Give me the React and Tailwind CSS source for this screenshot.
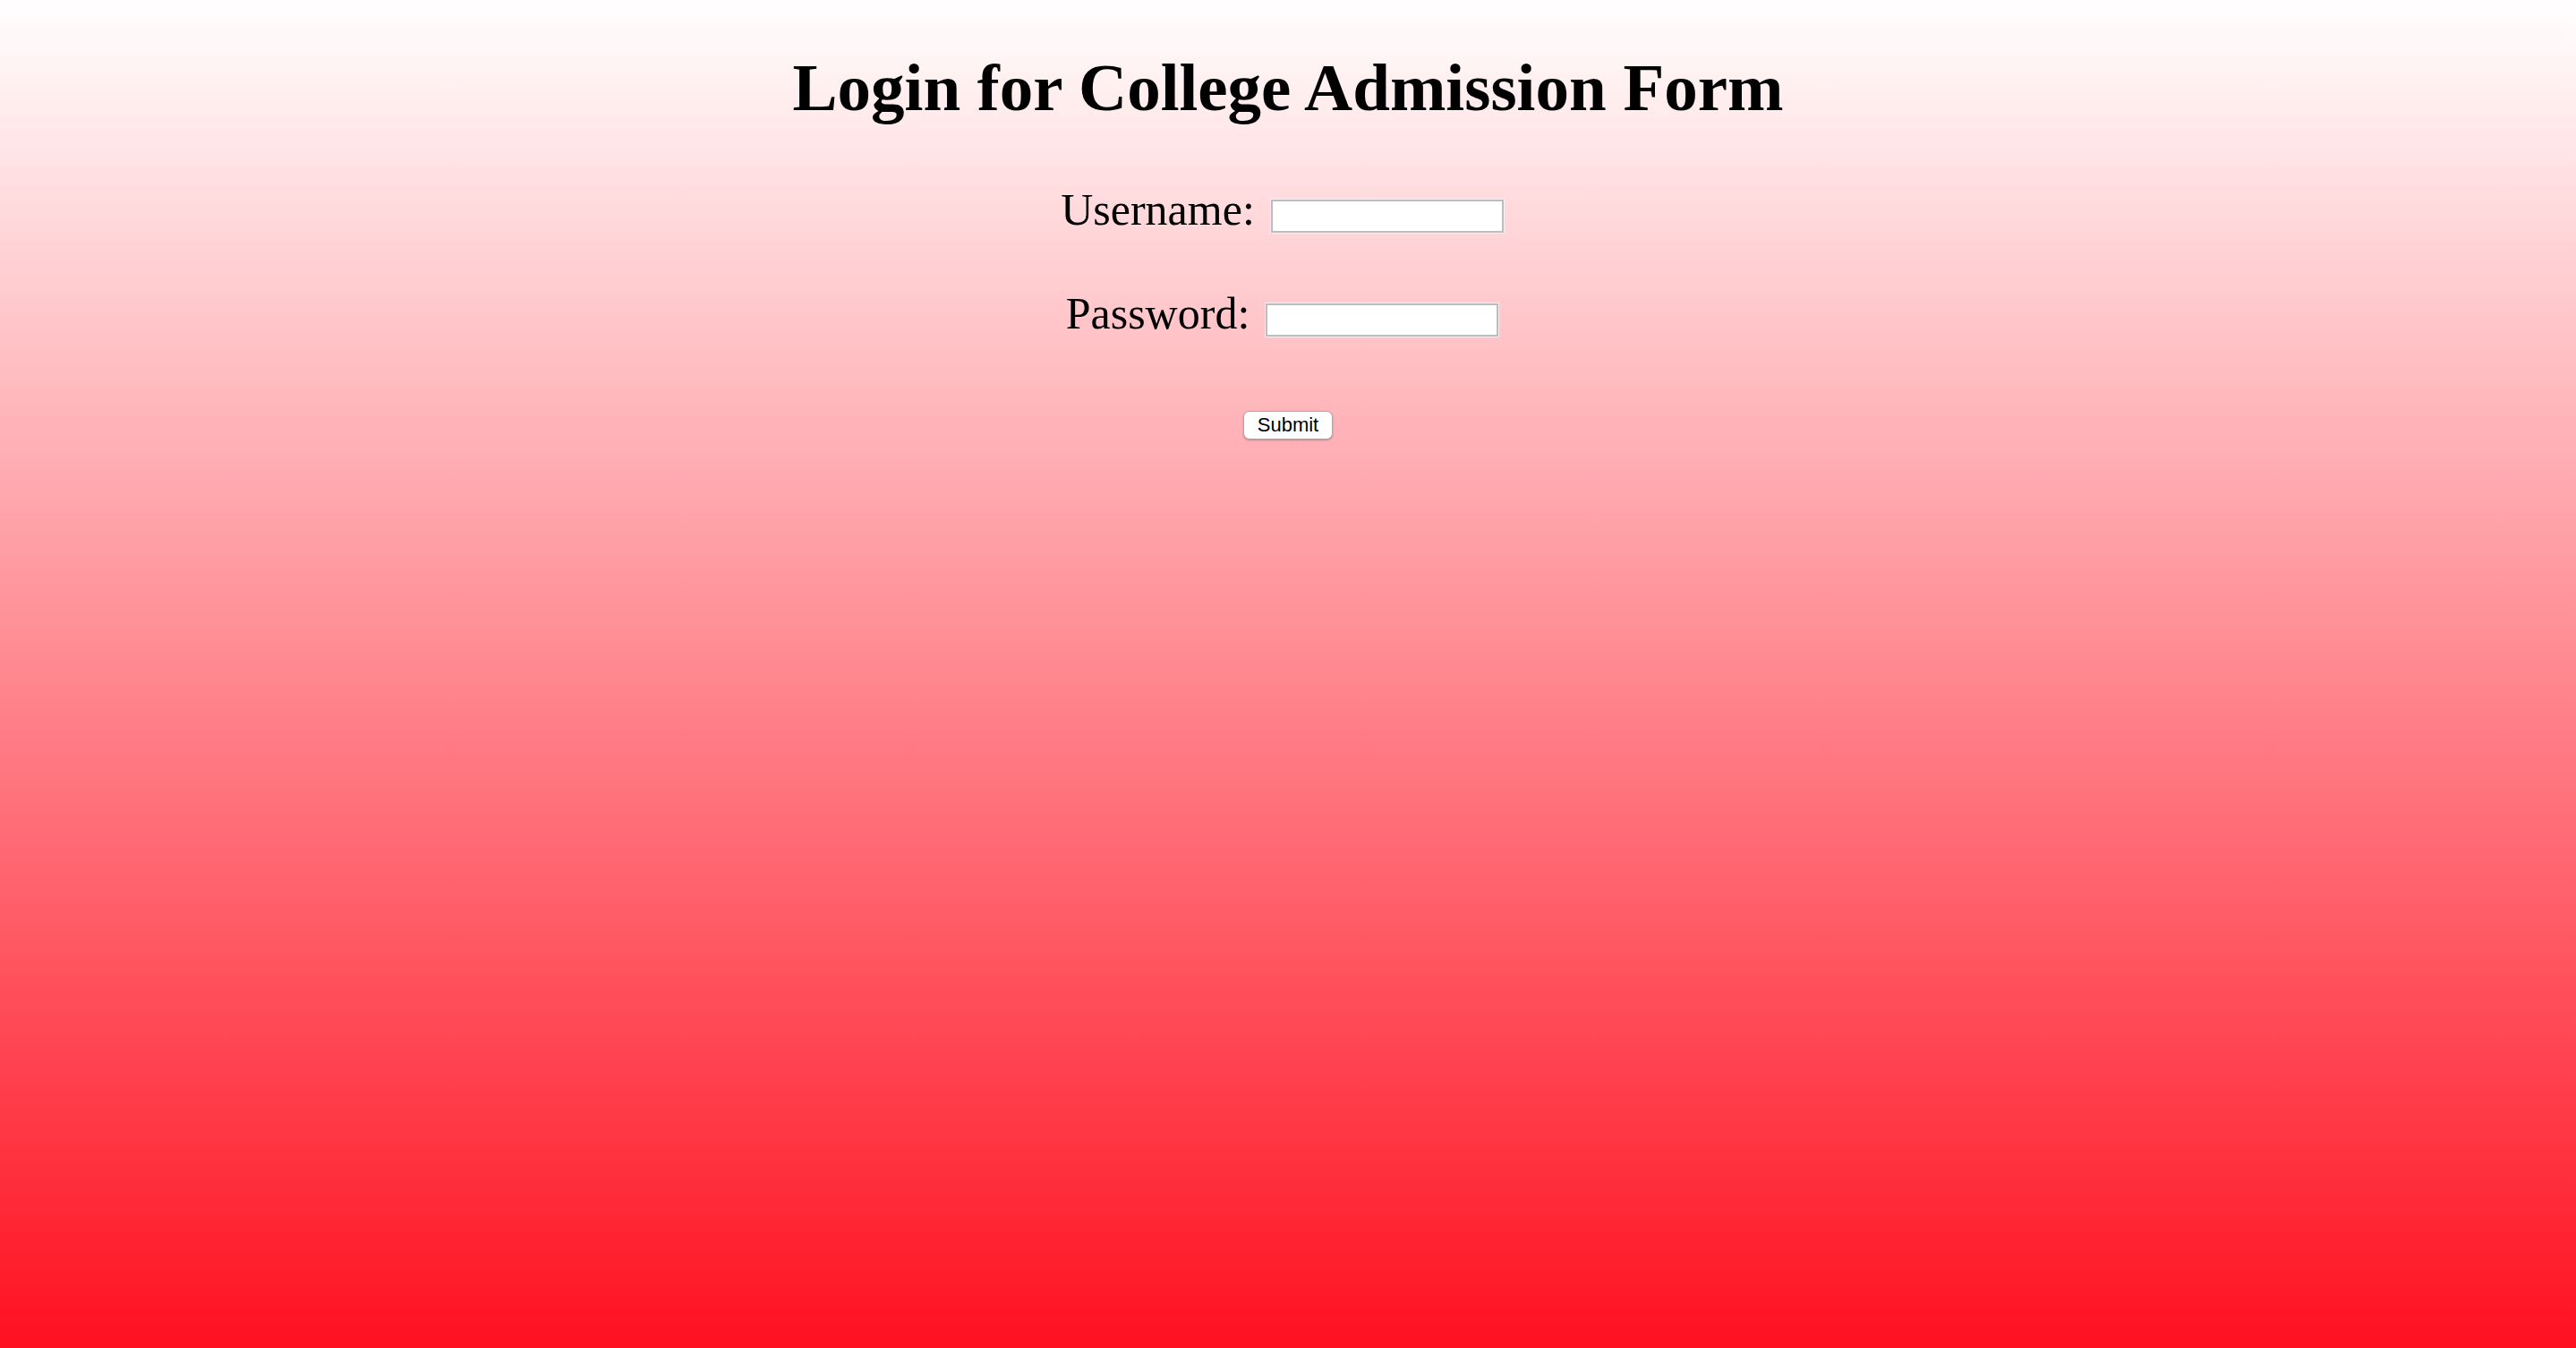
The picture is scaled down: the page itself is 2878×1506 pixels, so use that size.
export default function App() {
  return (
    <div className="h-screen w-full bg-linear-to-b/srgb from-white to-[#ff1020] flex flex-col items-center pt-[60px] font-['Liberation_Serif','Times_New_Roman',serif] text-black">
      <h1 className="text-[75px] leading-[75px] font-bold">Login for College Admission Form</h1>

      <form className="flex flex-col items-center" onSubmit={e => e.preventDefault()}>
        {/* Username */}
        <div className="mt-[74px] flex items-end gap-[18px] pr-[13px]">
          <label className="text-[50px] leading-[50px]">Username:</label>
          <input
            type="text"
            className="w-[260px] h-[37px] -mb-[1px] bg-white border-2 border-[#bdbdbd] shadow-[0_0_0_1px_#f6eeee] outline-none"
          />
        </div>

        {/* Password */}
        <div className="mt-[66px] flex items-end gap-[18px] pr-[13px]">
          <label className="text-[50px] leading-[50px]">Password:</label>
          <input
            type="password"
            className="w-[260px] h-[37px] -mb-[1px] bg-white border-2 border-[#bdbdbd] shadow-[0_0_0_1px_#f6eeee] outline-none"
          />
        </div>

        <button
          type="submit"
          className="mt-[84px] w-[100px] h-[32px] rounded-[7px] bg-white border border-[#b4a4a4] shadow-[0_1px_2px_rgba(0,0,0,0.25)] text-[22px] leading-none font-['Liberation_Sans',Arial,sans-serif] text-black"
        >
          Submit
        </button>
      </form>
    </div>
  );
}
